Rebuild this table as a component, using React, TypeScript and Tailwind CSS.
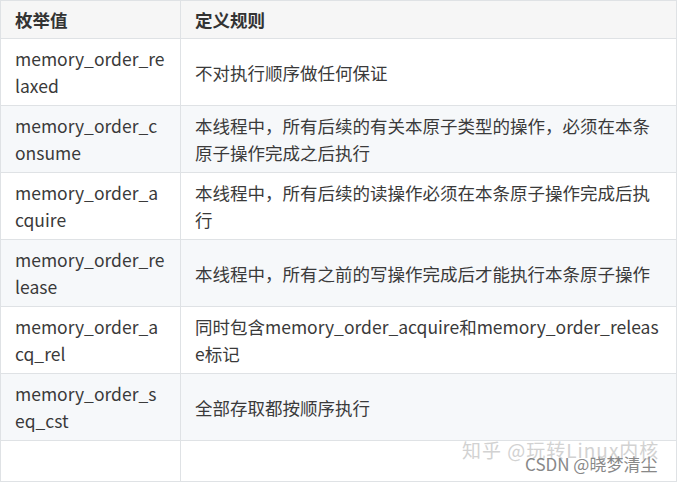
const rows: [string, string][] = [
  ["memory_order_relaxed", "不对执行顺序做任何保证"],
  ["memory_order_consume", "本线程中，所有后续的有关本原子类型的操作，必须在本条原子操作完成之后执行"],
  ["memory_order_acquire", "本线程中，所有后续的读操作必须在本条原子操作完成后执行"],
  ["memory_order_release", "本线程中，所有之前的写操作完成后才能执行本条原子操作"],
  ["memory_order_acq_rel", "同时包含memory_order_acquire和memory_order_release标记"],
  ["memory_order_seq_cst", "全部存取都按顺序执行"],
  ["", ""],
];

export default function App() {
  return (
    <div
      className="relative w-[679px] h-[482px] bg-white text-[#3a3a3a] overflow-hidden"
      style={{ fontFamily: '"Noto Sans CJK SC", "Noto Sans", sans-serif' }}
    >
      <table className="table-fixed border-collapse w-[677px] text-[17.5px] leading-[27px]">
        <colgroup>
          <col className="w-[180px]" />
          <col />
        </colgroup>
        <thead>
          <tr className="bg-[#f6f6f6] h-[38px]">
            <th className="border border-[#dfe2e5] px-[14px] text-left font-bold text-[#333]">枚举值</th>
            <th className="border border-[#dfe2e5] px-[14px] text-left font-bold text-[#333]">定义规则</th>
          </tr>
        </thead>
        <tbody>
          {rows.map(([name, desc], i) => (
            <tr
              key={i}
              className={`${i % 2 === 1 ? "bg-[#f6f8fa]" : "bg-white"} ${i === 6 ? "h-[41px]" : "h-[67px]"}`}
            >
              <td className="border border-[#dfe2e5] px-[14px] break-all align-middle">{name}</td>
              <td className="border border-[#dfe2e5] px-[14px] break-all align-middle">{desc}</td>
            </tr>
          ))}
        </tbody>
      </table>

      {/* watermarks */}
      <div className="absolute left-[462px] top-[436px] text-[19px] text-[#d2d2d2] tracking-[1px] whitespace-nowrap">
        知乎 @玩转Linux内核
      </div>
      <div className="absolute left-[525px] top-[451px] text-[17px] text-[#888] whitespace-nowrap">
        CSDN @晓梦清尘
      </div>
    </div>
  );
}
